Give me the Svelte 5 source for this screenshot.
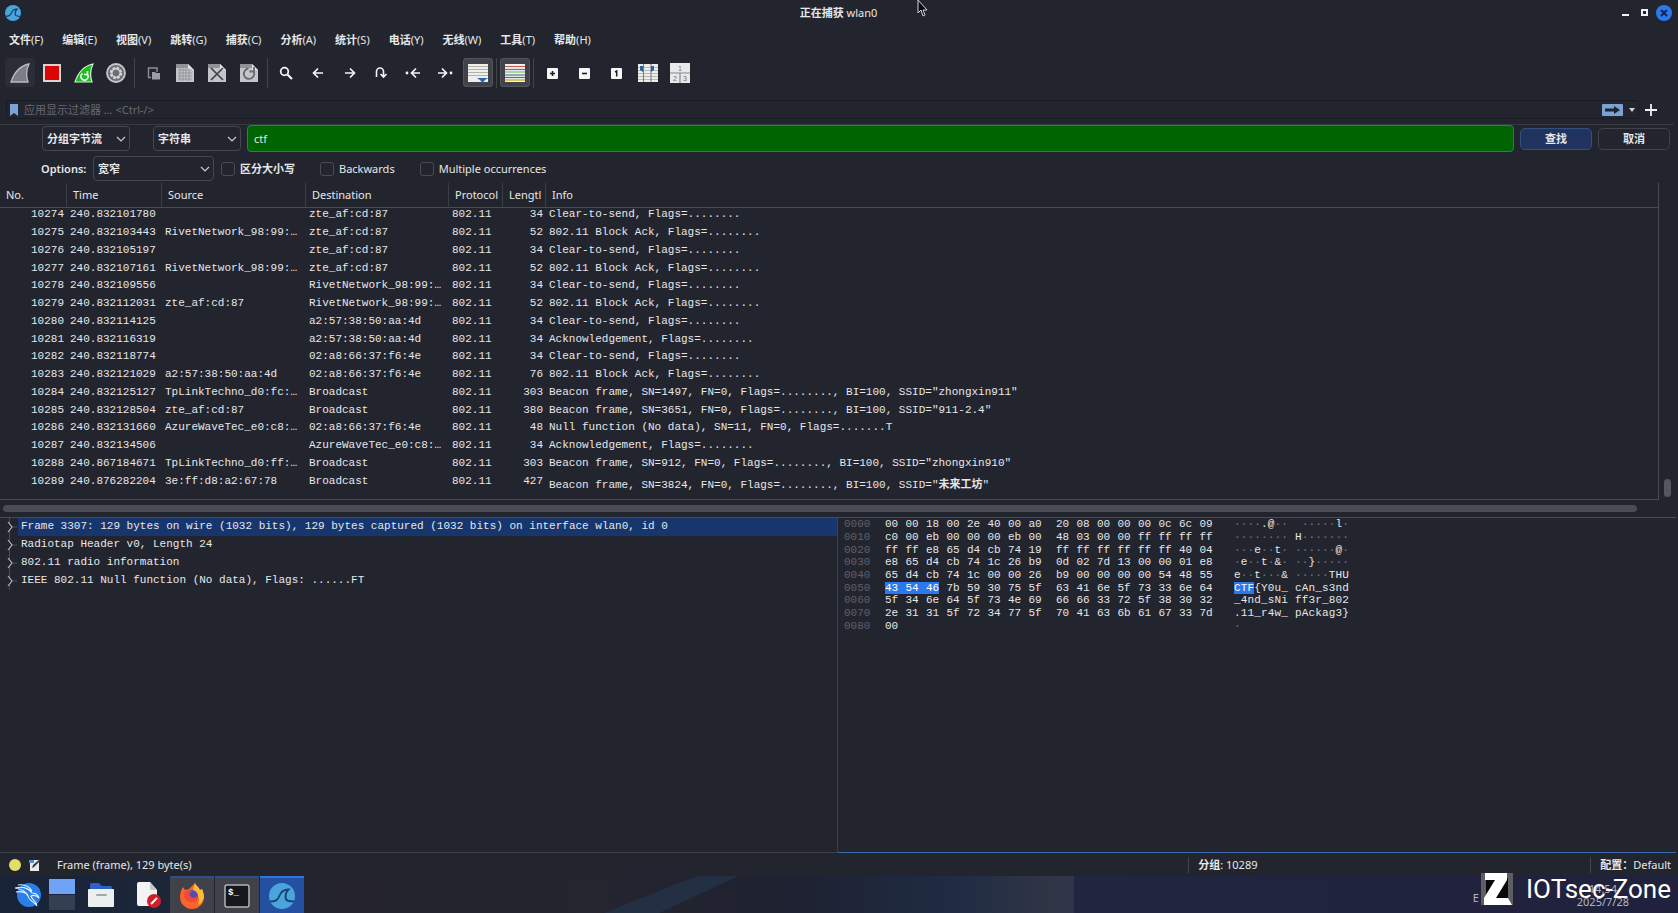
<script lang="ts">
  type Packet = [number, string, string, string, number, string, string?];

  const menus = [
    ['文件', 'F'], ['编辑', 'E'], ['视图', 'V'], ['跳转', 'G'], ['捕获', 'C'], ['分析', 'A'],
    ['统计', 'S'], ['电话', 'Y'], ['无线', 'W'], ['工具', 'T'], ['帮助', 'H'],
  ];

  const tools = [
    'start', 'stop', 'restart', 'options', '|', 'open', 'save', 'close', 'reload', '|',
    'find', 'back', 'forward', 'goto', 'first', 'last', 'autoscroll', '|', 'colorize', '|',
    'zoomin', 'zoomout', 'zoomreset', 'resize', 'layout',
  ];
  const pressed = ['autoscroll', 'colorize'];

  const columns = ['No.', 'Time', 'Source', 'Destination', 'Protocol', 'Lengtl', 'Info'];

  const packets: Packet[] = [
    [10274, '240.832101780', '', 'zte_af:cd:87', 34, 'Clear-to-send, Flags=........'],
    [10275, '240.832103443', 'RivetNetwork_98:99:…', 'zte_af:cd:87', 52, '802.11 Block Ack, Flags=........'],
    [10276, '240.832105197', '', 'zte_af:cd:87', 34, 'Clear-to-send, Flags=........'],
    [10277, '240.832107161', 'RivetNetwork_98:99:…', 'zte_af:cd:87', 52, '802.11 Block Ack, Flags=........'],
    [10278, '240.832109556', '', 'RivetNetwork_98:99:…', 34, 'Clear-to-send, Flags=........'],
    [10279, '240.832112031', 'zte_af:cd:87', 'RivetNetwork_98:99:…', 52, '802.11 Block Ack, Flags=........'],
    [10280, '240.832114125', '', 'a2:57:38:50:aa:4d', 34, 'Clear-to-send, Flags=........'],
    [10281, '240.832116319', '', 'a2:57:38:50:aa:4d', 34, 'Acknowledgement, Flags=........'],
    [10282, '240.832118774', '', '02:a8:66:37:f6:4e', 34, 'Clear-to-send, Flags=........'],
    [10283, '240.832121029', 'a2:57:38:50:aa:4d', '02:a8:66:37:f6:4e', 76, '802.11 Block Ack, Flags=........'],
    [10284, '240.832125127', 'TpLinkTechno_d0:fc:…', 'Broadcast', 303, 'Beacon frame, SN=1497, FN=0, Flags=........, BI=100, SSID=', 'zhongxin911'],
    [10285, '240.832128504', 'zte_af:cd:87', 'Broadcast', 380, 'Beacon frame, SN=3651, FN=0, Flags=........, BI=100, SSID=', '911-2.4'],
    [10286, '240.832131660', 'AzureWaveTec_e0:c8:…', '02:a8:66:37:f6:4e', 48, 'Null function (No data), SN=11, FN=0, Flags=.......T'],
    [10287, '240.832134506', '', 'AzureWaveTec_e0:c8:…', 34, 'Acknowledgement, Flags=........'],
    [10288, '240.867184671', 'TpLinkTechno_d0:ff:…', 'Broadcast', 303, 'Beacon frame, SN=912, FN=0, Flags=........, BI=100, SSID=', 'zhongxin910'],
    [10289, '240.876282204', '3e:ff:d8:a2:67:78', 'Broadcast', 427, 'Beacon frame, SN=3824, FN=0, Flags=........, BI=100, SSID=', '未来工坊'],
  ];

  const tree = [
    'Frame 3307: 129 bytes on wire (1032 bits), 129 bytes captured (1032 bits) on interface wlan0, id 0',
    'Radiotap Header v0, Length 24',
    '802.11 radio information',
    'IEEE 802.11 Null function (No data), Flags: ......FT',
  ];

  const dump = [
    '00 00 18 00 2e 40 00 a0 20 08 00 00 00 0c 6c 09',
    'c0 00 eb 00 00 00 eb 00 48 03 00 00 ff ff ff ff',
    'ff ff e8 65 d4 cb 74 19 ff ff ff ff ff ff 40 04',
    'e8 65 d4 cb 74 1c 26 b9 0d 02 7d 13 00 00 01 e8',
    '65 d4 cb 74 1c 00 00 26 b9 00 00 00 00 54 48 55',
    '43 54 46 7b 59 30 75 5f 63 41 6e 5f 73 33 6e 64',
    '5f 34 6e 64 5f 73 4e 69 66 66 33 72 5f 38 30 32',
    '2e 31 31 5f 72 34 77 5f 70 41 63 6b 61 67 33 7d',
    '00',
  ];

  const selStart = 0x50;
  const selEnd = 0x52;

  const rows = dump.map((line, r) => {
    const bytes = line.split(' ').map((hex, i) => {
      const code = parseInt(hex, 16);
      const pos = r * 16 + i;
      const printable = code >= 0x20 && code < 0x7f;
      return {
        hex,
        ch: printable ? String.fromCharCode(code) : '·',
        printable,
        selected: pos >= selStart && pos <= selEnd,
        last: pos === selEnd,
      };
    });
    return {
      offset: (r * 16).toString(16).padStart(4, '0'),
      groups: [bytes.slice(0, 8), bytes.slice(8)],
    };
  });

  let search = $state('ctf');
  let filter = $state('');
  let selectedItem = $state(0);
</script>

{#snippet sheet()}
  <path d="M1 1h12l6 6v12H1z" fill="#c3c5c9" />
  <path d="M1 1h12v4H1z" fill="#8f9298" />
  <path d="M13 1v6h6z" fill="#e2e3e6" />
{/snippet}

{#snippet wave(color: string)}
  <circle cx="12" cy="12" r="12" fill="#4aa5dc" />
  <path d="M1 17c5 0 7-1 8.500-5C11 8 13 6 18 6c-3 3-3 6-2.500 8.500C16 17 19 17 23 17" fill="none" stroke={color} stroke-width="1.700" />
{/snippet}

{#snippet icon(name: string)}
  <svg width="20" height="20" viewBox="0 0 20 20" aria-hidden="true">
    {#if name === 'start'}
      <path d="M1 19C4 10 9 3 19 1c-3 6-3 12-1 18z" fill="#7b7e85" stroke="#b9bbbf" stroke-width="1.3" />
    {:else if name === 'stop'}
      <rect x="1" y="1" width="18" height="18" fill="#d9d3d3" />
      <rect x="3" y="3" width="14" height="14" fill="#dd0404" />
    {:else if name === 'restart'}
      <path d="M1 19C4 10 9 3 19 1c-3 6-3 12-1 18z" fill="#17c01b" stroke="#d8efd8" stroke-width="1.2" />
      <path d="M8.500 10.500a3.600 3.600 0 1 0 5 1M13.500 8v3.500H10" fill="none" stroke="#fff" stroke-width="1.6" />
    {:else if name === 'options'}
      <circle cx="10" cy="10" r="9" fill="#6c6f76" stroke="#c5c7cb" stroke-width="1.8" />
      <circle cx="10" cy="10" r="5" fill="none" stroke="#d5d6d9" stroke-width="2.400" stroke-dasharray="2.6 1.300" />
      <circle cx="10" cy="10" r="4.200" fill="none" stroke="#d5d6d9" stroke-width="1.200" />
    {:else if name === 'open'}
      <path d="M8 14.500H5.500V5h8.500v4" fill="none" stroke="#8c8f95" stroke-width="1.400" />
      <path d="M9 9h3l1 1h4v6.500H9z" fill="#9b9ea3" />
    {:else if name === 'save'}
      {@render sheet()}
      <path d="M3 7h14M3 10h14M3 13h14M3 16h14M5 5v13M8 5v13M11 5v13M14 5v13" stroke="#85888e" stroke-width="0.700" />
    {:else if name === 'close'}
      {@render sheet()}
      <path d="M4 5l12 12M16 5L4 17" stroke="#3f4249" stroke-width="1.700" />
    {:else if name === 'reload'}
      {@render sheet()}
      <path d="M14.500 8a5.200 5.200 0 1 1-5-2.500M15 4v4.500h-4.500" fill="none" stroke="#65686f" stroke-width="1.800" />
    {:else if name === 'find'}
      <circle cx="8.500" cy="8.500" r="3.800" fill="none" stroke="#f4f4f5" stroke-width="1.800" />
      <path d="M11.500 11.500l4.500 4.500" stroke="#f4f4f5" stroke-width="2.200" />
    {:else if name === 'back'}
      <path d="M15 10H6M10 5.500L5.500 10l4.500 4.500" fill="none" stroke="#f4f4f5" stroke-width="1.700" />
    {:else if name === 'forward'}
      <path d="M5 10h9M10 5.500l4.500 4.500-4.500 4.500" fill="none" stroke="#f4f4f5" stroke-width="1.700" />
    {:else if name === 'goto'}
      <path d="M4.500 14V8.500a3.500 3.500 0 0 1 7 0V14M8.500 11l3 3 3-3" fill="none" stroke="#f4f4f5" stroke-width="1.600" />
    {:else if name === 'first'}
      <circle cx="3" cy="10" r="1.400" fill="#f4f4f5" />
      <path d="M16 10H8M12 5.500L7.500 10l4.500 4.500" fill="none" stroke="#f4f4f5" stroke-width="1.700" />
    {:else if name === 'last'}
      <circle cx="15" cy="10" r="1.400" fill="#f4f4f5" />
      <path d="M2 10h8M6 5.500l4.500 4.500L6 14.500" fill="none" stroke="#f4f4f5" stroke-width="1.700" />
    {:else if name === 'autoscroll'}
      <rect x="0" y="1" width="20" height="18" fill="#eeefea" />
      <path d="M0 3.500h20M0 6.500h20M0 9.500h20M0 12.500h20" stroke="#b3b2aa" />
      <path d="M9 15h11l-3 2-2.500 3-2.500-3z" fill="#2e66a5" />
    {:else if name === 'colorize'}
      <rect x="0" y="1" width="20" height="18" fill="#f4f4ee" />
      <path d="M0 3.500h20" stroke="#c95c5c" stroke-width="1.200" />
      <path d="M0 6.500h20" stroke="#67709f" stroke-width="1.200" />
      <path d="M0 9h20" stroke="#6fc65a" stroke-width="1.200" />
      <path d="M0 12h20" stroke="#4f72b1" stroke-width="1.200" />
      <path d="M0 14.500h20" stroke="#686b6f" stroke-width="1.200" />
      <path d="M0 17h20" stroke="#d8c46a" stroke-width="2" />
    {:else if name === 'zoomin'}
      <rect x="5" y="5" width="11" height="11" rx="1" fill="#f6f6f7" />
      <path d="M10.500 8v5M8 10.500h5" stroke="#1c1f27" stroke-width="1.600" />
    {:else if name === 'zoomout'}
      <rect x="5" y="5" width="11" height="11" rx="1" fill="#f6f6f7" />
      <path d="M8 10.500h5" stroke="#1c1f27" stroke-width="1.600" />
    {:else if name === 'zoomreset'}
      <rect x="5" y="5" width="11" height="11" rx="1" fill="#f6f6f7" />
      <path d="M9 9l1.700-1v5.500" fill="none" stroke="#1c1f27" stroke-width="1.500" />
    {:else if name === 'resize'}
      <rect x="0" y="1" width="20" height="18" fill="#eceeea" />
      <path d="M0 4.500h20M0 7.500h20M0 10.500h20M0 13.500h20M0 16.500h20" stroke="#b9bab5" />
      <path d="M5.500 1v18M13 1v18" stroke="#777a7d" />
      <path d="M2 3h3v6l-3-2zM16 3h-3v6l3-2z" fill="#2b62a4" />
    {:else if name === 'layout'}
      <rect x="0" y="0" width="20" height="20" fill="#e8e9e8" />
      <path d="M0 10h20M10 10v10" stroke="#85888b" stroke-width="1.200" />
      <g fill="#6f7275" font-family="Liberation Sans" font-size="7">
        <text x="8" y="8">1</text><text x="3" y="18">2</text><text x="13" y="18">3</text>
      </g>
    {/if}
  </svg>
{/snippet}

{#snippet chevron()}
  <svg class="chevron" width="10" height="10" viewBox="0 0 10 10" aria-hidden="true">
    <path d="M1 3l4 4 4-4" fill="none" stroke="#c9cbd0" stroke-width="1.200" />
  </svg>
{/snippet}

<div class="window">
  <header class="titlebar">
    <svg class="app-icon" width="16" height="16" viewBox="0 0 24 24" aria-hidden="true">{@render wave('#123f63')}</svg>
    <h1><b>正在捕获</b> wlan0</h1>
    <div class="window-buttons">
      <button aria-label="最小化"><svg width="16" height="16" viewBox="0 0 16 16"><path d="M4 10h7" stroke="#f2f2f3" stroke-width="2" /></svg></button>
      <button aria-label="最大化"><svg width="16" height="16" viewBox="0 0 16 16"><rect x="5" y="5" width="5" height="5" fill="none" stroke="#f2f2f3" stroke-width="2" /></svg></button>
      <button aria-label="关闭"><svg width="16" height="16" viewBox="0 0 16 16"><circle cx="8" cy="8" r="8" fill="#2c78ee" /><path d="M5 5l6 6M11 5l-6 6" stroke="#14264d" stroke-width="2" /></svg></button>
    </div>
    <svg class="pointer" width="11" height="18" viewBox="0 0 11 18" aria-hidden="true">
      <path d="M1 0v13l3-3 2 6 2-1-2-5h4z" fill="#08090b" stroke="#d4d5d8" />
    </svg>
  </header>

  <nav class="menubar">
    {#each menus as [label, key]}
      <button><b>{label}</b>({key})</button>
    {/each}
  </nav>

  <div class="toolbar" role="toolbar">
    {#each tools as tool}
      {#if tool === '|'}
        <span class="separator"></span>
      {:else}
        <button class:pressed={pressed.includes(tool)} class:soft={tool === 'start'} aria-label={tool}>
          {@render icon(tool)}
        </button>
      {/if}
    {/each}
  </div>

  <div class="filterbar">
    <div class="filter-field">
      <button class="bookmark" aria-label="书签">
        <svg width="8" height="12" viewBox="0 0 8 12"><path d="M0 0h8v12L4 9l-4 3z" fill="#7aa4d8" /></svg>
      </button>
      <input aria-label="显示过滤器" placeholder="应用显示过滤器 … <Ctrl-/>" bind:value={filter} />
      <button class="apply" aria-label="应用">
        <svg width="15" height="8" viewBox="0 0 15 8"><path d="M0 2.500h9V0l6 4-6 4V5.500H0z" fill="#1c2534" /></svg>
      </button>
      <button class="history" aria-label="历史">
        <svg width="6" height="4" viewBox="0 0 6 4"><path d="M0 0h6L3 4z" fill="#cfd1d5" /></svg>
      </button>
    </div>
    <button class="add" aria-label="添加">
      <svg width="12" height="12" viewBox="0 0 12 12"><path d="M6 0v12M0 6h12" stroke="#f2f2f3" stroke-width="1.800" /></svg>
    </button>
  </div>

  <form class="search" onsubmit={(e) => e.preventDefault()}>
    <div class="search-row">
      <div class="combo domain">
        <select aria-label="查找范围"><option>分组字节流</option></select>
        {@render chevron()}
      </div>
      <div class="combo kind">
        <select aria-label="查找类型"><option>字符串</option></select>
        {@render chevron()}
      </div>
      <input class="query" aria-label="查找内容" bind:value={search} />
      <button class="action primary">查找</button>
      <button class="action" type="button">取消</button>
    </div>
    <div class="options-row">
      <label class="options-label" for="charset">Options:</label>
      <div class="combo charset">
        <select id="charset"><option>宽窄</option></select>
        {@render chevron()}
      </div>
      <label class="check"><input type="checkbox" /><b>区分大小写</b></label>
      <label class="check backwards"><input type="checkbox" />Backwards</label>
      <label class="check"><input type="checkbox" />Multiple occurrences</label>
    </div>
  </form>

  <section class="packets">
    <div class="packet-list">
      <table>
        <colgroup>
          <col class="c-no" /><col class="c-time" /><col class="c-src" /><col class="c-dst" />
          <col class="c-proto" /><col class="c-len" /><col />
        </colgroup>
        <thead>
          <tr>
            {#each columns as column}<th>{column}</th>{/each}
          </tr>
        </thead>
        <tbody>
          {#each packets as [no, time, source, destination, length, info, ssid]}
            <tr>
              <td class="num">{no}</td>
              <td>{time}</td>
              <td>{source}</td>
              <td>{destination}</td>
              <td>802.11</td>
              <td class="num">{length}</td>
              <td class="info">{info}{#if ssid}"<span>{ssid}</span>"{/if}</td>
            </tr>
          {/each}
        </tbody>
      </table>
    </div>
    <div class="v-scroll"><span></span></div>
  </section>
  <div class="h-scroll"><span></span></div>

  <main class="details">
    <ul class="tree">
      {#each tree as item, i}
        <li>
          <button class:selected={selectedItem === i} onclick={() => (selectedItem = i)}>
            <svg width="18" height="18" viewBox="0 0 18 18" aria-hidden="true">
              <path d="M9.500 0v5M9.500 13v5M13 9h4" stroke="#4b4e56" />
              <path d="M8 4l4 5-4 5" fill="none" stroke="#b9bbc0" stroke-width="1.200" />
            </svg>
            <span>{item}</span>
          </button>
        </li>
      {/each}
    </ul>
    <div class="bytes">
      {#each rows as row}
        <div class="byte-row">
          <span class="offset">{row.offset}</span>
          {#each row.groups as group}
            <span class="hex">
              {#each group as byte}
                <span class:selected={byte.selected} class:last={byte.last}>{byte.hex}</span>
              {/each}
            </span>
          {/each}
          <span class="gutter"></span>
          {#each row.groups as group}
            <span class="ascii">
              {#each group as byte}
                <span class:selected={byte.selected} class:dim={!byte.printable}>{byte.ch}</span>
              {/each}
            </span>
          {/each}
        </div>
      {/each}
    </div>
  </main>

  <footer class="statusbar">
    <svg width="12" height="12" viewBox="0 0 12 12" aria-hidden="true"><circle cx="6" cy="6" r="6" fill="#e2de6a" /></svg>
    <svg width="12" height="12" viewBox="0 0 12 12" aria-hidden="true">
      <path d="M1 1h9v11H1z" fill="#e7eaec" />
      <path d="M0 1h5v3H0z" fill="#5791bd" />
      <path d="M3 9l1-3 7-6 1 1-7 7z" fill="#30343a" />
    </svg>
    <span class="status-text">Frame (frame), 129 byte(s)</span>
    <span class="status-cell count"><b>分组</b>: 10289</span>
    <span class="status-cell profile"><b>配置：</b>Default</span>
  </footer>

  <div class="taskbar">
    <button class="task kali" aria-label="Kali">
      <svg width="26" height="26" viewBox="0 0 26 26">
        <circle cx="14" cy="13" r="12" fill="#2b7fe8" />
        <path d="M0 6c7-2 14 0 17 5 3 0 6 2 7 5-3-3-6-3-8-2 1 4 5 4 6 10-2-4-8-5-9-10C11 9 6 7 0 6zM1 10c5-1 9 0 12 3M3 3c6-1 11 1 14 6" fill="none" stroke="#eaf3ff" stroke-width="1.100" />
      </svg>
    </button>
    <button class="pager" aria-label="工作区"><span></span><span></span></button>
    <button class="task files" aria-label="文件">
      <svg width="26" height="24" viewBox="0 0 26 24">
        <path d="M2 2q0-2 2-2h7l3 3h8q2 0 2 2v6H2z" fill="#2c62c4" />
        <rect y="6" width="26" height="18" rx="1" fill="#eceef0" />
        <rect x="8" y="11" width="11" height="2" rx="1" fill="#a5a8ab" />
      </svg>
    </button>
    <button class="task editor" aria-label="编辑器">
      <svg width="24" height="26" viewBox="0 0 24 26">
        <path d="M0 2q0-2 2-2h11l7 8v16H2q-2 0-2-2z" fill="#f3f3f4" />
        <path d="M13 0l7 8h-7z" fill="#c6c8ca" />
        <circle cx="17" cy="19" r="7" fill="#cf1f2b" />
        <path d="M14 22l6-6" stroke="#fff" stroke-width="2" />
      </svg>
    </button>
    <button class="tile" aria-label="Firefox">
      <svg width="26" height="26" viewBox="0 0 26 26">
        <path d="M1 14C1 10 2 7 4 4l2 3 4-1c2-2 4-4 6-6 1 3 4 4 5 7l2-1c1 3 2 5 2 8a12 12 0 0 1-24 0z" fill="#f8642b" />
        <path d="M16 0c1 3 4 4 5 7l2-1c1 3 2 5 2 8-1 4-3 7-6 8 2-5 1-10-5-15z" fill="#fdbb35" />
        <circle cx="13" cy="13" r="6" fill="#5a4ab8" />
        <path d="M6 8c3-2 5 0 8 1-4 0-4 2-3 4 2 3 6 2 7 0 1 5-3 7-7 6-5-1-7-6-5-11z" fill="#f24a37" />
      </svg>
    </button>
    <button class="tile" aria-label="终端">
      <svg width="26" height="24" viewBox="0 0 26 24">
        <rect x="1" y="1" width="24" height="22" rx="2" fill="#15171a" stroke="#b3b5b9" stroke-width="1.500" />
        <text x="4" y="11" fill="#fff" font-family="Liberation Mono" font-size="9" font-weight="700">$_</text>
      </svg>
    </button>
    <button class="tile active" aria-label="Wireshark">
      <svg width="26" height="26" viewBox="0 0 24 24">{@render wave('#174274')}</svg>
    </button>
    <div class="tray">
      <span class="keyboard">E</span>
      <div class="clock"><span>14:54</span><span>2025/7/28</span></div>
    </div>
    <div class="brand">
      <svg width="32" height="32" viewBox="0 0 32 32" aria-hidden="true">
        <path d="M0 0h32v32H0z" fill="#5d5e62" />
        <path d="M5 5h22v22H5z" fill="#08090a" />
        <path d="M4 0h22v7L15 25h12l4 7H3v-7L14 7H4z" fill="#fff" />
      </svg>
      <span>IOTsec-Zone</span>
    </div>
  </div>
</div>

<style>
  :global(body) {
    margin: 0;
    background: #23252e;
  }
  .window {
    --line: #4a4c54;
    --mono: 'Liberation Mono', 'Noto Sans CJK SC', monospace;
    display: flex;
    flex-direction: column;
    min-height: 100vh;
    background: #23252e;
    color: #e6e7ea;
    font: 11px/16px 'Noto Sans', 'Noto Sans CJK SC', sans-serif;
  }
  button,
  input,
  select {
    font: inherit;
    color: inherit;
    background: none;
    border: 0;
    margin: 0;
    padding: 0;
    box-sizing: border-box;
  }
  svg {
    display: block;
    flex: none;
  }

  .titlebar {
    position: relative;
    display: grid;
    grid-template-columns: 1fr auto 1fr;
    align-items: center;
    height: 25px;
    padding: 0 6px 0 5px;
  }
  .titlebar h1 {
    margin: 0;
    font: inherit;
  }
  .window-buttons {
    display: flex;
    justify-content: flex-end;
    gap: 3px;
  }
  .pointer {
    position: absolute;
    left: 917px;
    top: 0;
  }

  .menubar {
    display: flex;
    gap: 19px;
    height: 29px;
    padding-left: 9px;
  }

  .toolbar {
    display: flex;
    align-items: center;
    gap: 2px;
    height: 37px;
    padding: 0 5px;
  }
  .toolbar button {
    display: grid;
    place-items: center;
    width: 30px;
    height: 29px;
    border-radius: 4px;
  }
  .toolbar .soft {
    background: #2c2e37;
  }
  .toolbar .pressed {
    background: #42434a;
    box-shadow: inset 0 0 0 1px #52545b;
  }
  .separator {
    width: 1px;
    height: 30px;
    margin: 0 1px;
    background: #42444c;
  }

  .filterbar {
    display: flex;
    align-items: center;
    margin-top: 9px;
    padding: 0 21px 0 6px;
    gap: 6px;
  }
  .filter-field {
    display: flex;
    align-items: center;
    flex: 1;
    border: 1px solid #1a1c23;
    border-radius: 2px;
  }
  .filter-field input {
    flex: 1;
    height: 17px;
    outline: none;
  }
  .filter-field input::placeholder {
    color: #666971;
    opacity: 1;
  }
  .bookmark {
    padding: 0 6px 0 3px;
  }
  .apply {
    display: grid;
    place-items: center;
    width: 21px;
    height: 12px;
    border-radius: 1px;
    background: #7ba2d2;
  }
  .history {
    padding: 0 3px 0 6px;
  }

  .search {
    border-top: 1px solid #393b43;
    margin: 5px 4px 0 0;
  }
  .search-row {
    display: flex;
    align-items: center;
    gap: 6px;
    height: 27px;
    padding: 0 4px 0 42px;
  }
  .combo {
    position: relative;
    height: 25px;
    font-weight: 700;
  }
  .combo select {
    appearance: none;
    width: 100%;
    height: 100%;
    padding-left: 4px;
    border: 1px solid #454750;
    border-radius: 4px;
  }
  .chevron {
    position: absolute;
    right: 4px;
    top: 8px;
    pointer-events: none;
  }
  .domain {
    width: 88px;
    margin-right: 17px;
  }
  .kind {
    width: 88px;
  }
  .charset {
    width: 121px;
  }
  .query {
    flex: 1;
    height: 27px;
    padding: 0 6px;
    border: 1px solid #257a82;
    border-radius: 4px;
    background: #006400;
    outline: none;
  }
  .action {
    width: 72px;
    height: 22px;
    border: 1px solid #41434b;
    border-radius: 5px;
    font-weight: 700;
  }
  .primary {
    background: #20345f;
    border-color: #34507f;
  }
  .options-row {
    display: flex;
    align-items: center;
    height: 27px;
    padding: 3px 0 1px 41px;
  }
  .options-label {
    width: 52px;
    font-weight: 600;
  }
  .check {
    display: flex;
    align-items: center;
    gap: 5px;
    margin-left: 7px;
  }
  .check input {
    appearance: none;
    width: 14px;
    height: 14px;
    border: 1px solid #4a4c55;
    border-radius: 3px;
  }
  .backwards {
    margin: 0 18px 0 25px;
  }

  .packets {
    display: flex;
  }
  .packet-list {
    flex: 1;
    padding-bottom: 2px;
    border: 1px solid var(--line);
    border-width: 0 1px 1px 0;
  }
  table {
    width: 100%;
    table-layout: fixed;
    border-collapse: separate;
    border-spacing: 0;
  }
  .c-no {
    width: 67px;
  }
  .c-time {
    width: 95px;
  }
  .c-src {
    width: 144px;
  }
  .c-dst {
    width: 143px;
  }
  .c-proto {
    width: 54px;
  }
  .c-len {
    width: 43px;
  }
  th {
    height: 25px;
    padding: 0 0 0 6px;
    border-bottom: 1px solid var(--line);
    border-right: 1px solid #3c3e46;
    font-weight: 400;
    text-align: left;
    white-space: nowrap;
    overflow: hidden;
    box-sizing: border-box;
  }
  th:last-child {
    border-right: 0;
  }
  td {
    height: 18px;
    padding: 0 3px;
    font-family: var(--mono);
    line-height: 17px;
    white-space: nowrap;
    vertical-align: top;
  }
  tr:nth-child(4n) td {
    height: 17px;
  }
  tbody tr:first-child td {
    height: 16px;
    line-height: 13px;
  }
  tbody tr:last-child td {
    height: 24px;
  }
  tbody tr:last-child .info {
    vertical-align: middle;
  }
  tbody tr:last-child .info span {
    font-weight: 700;
  }
  .num {
    text-align: right;
  }
  .v-scroll {
    display: flex;
    align-items: flex-end;
    padding: 0 7px 3px 5px;
  }
  .v-scroll span {
    width: 7px;
    height: 18px;
    border-radius: 4px;
    background: #555760;
  }
  .h-scroll {
    padding: 5px 41px 5px 3px;
  }
  .h-scroll span {
    display: block;
    height: 7px;
    border-radius: 4px;
    background: #4a4c54;
  }

  .details {
    display: grid;
    grid-template-columns: 1fr 1fr;
    flex: 1;
    margin-right: 2px;
    border-top: 1px solid var(--line);
    font-family: var(--mono);
  }
  .tree {
    margin: 0;
    padding: 0;
    list-style: none;
    border: 1px solid #3f4149;
    border-width: 0 1px 1px 0;
  }
  .tree button {
    display: flex;
    width: 100%;
    height: 18px;
    text-align: left;
  }
  .tree span {
    flex: 1;
    padding-left: 3px;
    line-height: 17px;
    white-space: nowrap;
  }
  .tree .selected span {
    background: #17366e;
  }
  .bytes {
    padding-left: 6px;
    border-bottom: 1px solid #3a69ad;
    line-height: 13px;
  }
  .byte-row {
    display: flex;
    gap: 7px;
  }
  .byte-row:nth-child(3n) {
    line-height: 12px;
  }
  .offset {
    width: 34px;
    color: #5d6068;
  }
  .hex {
    display: grid;
    grid-template-columns: repeat(8, 1fr);
    width: 164px;
  }
  .ascii {
    display: grid;
    grid-template-columns: repeat(8, 1fr);
    width: 54px;
    white-space: pre;
  }
  .gutter {
    width: 0;
  }
  .dim {
    color: #767982;
  }
  .bytes .selected {
    background: #2b78ee;
    color: #fff;
  }
  .hex .last {
    justify-self: start;
  }

  .statusbar {
    display: flex;
    align-items: center;
    height: 23px;
    padding-left: 9px;
    gap: 8px;
  }
  .status-text {
    flex: 1;
    padding-left: 8px;
  }
  .status-cell {
    padding-left: 9px;
    border-left: 1px solid #44464e;
    box-sizing: border-box;
  }
  .count {
    width: 394px;
  }
  .profile {
    padding-right: 7px;
  }

  .taskbar {
    position: relative;
    display: flex;
    align-items: stretch;
    height: 37px;
    background: linear-gradient(90deg, #192338 0, #1c2638 9%, #25242e 20%, #24252f 36%, #20222f 44%, #1e2233 48%, #1f2c43 57%, #2f3445 62%, #31354a 64%, #202640 64%, #20213d 100%);
  }
  .taskbar::before {
    content: '';
    position: absolute;
    inset: 0 56% 0 36%;
    background: #232f43;
    clip-path: polygon(69% 0, 100% 0, 41% 100%, 0 100%);
  }
  .task {
    display: grid;
    place-items: center;
  }
  .kali {
    padding-left: 15px;
  }
  .pager {
    display: grid;
    gap: 1px;
    width: 26px;
    height: 31px;
    margin: 3px 0 0 8px;
  }
  .pager span {
    background: #344052;
  }
  .pager span:first-child {
    background: #70a3f5;
  }
  .files {
    padding-left: 13px;
  }
  .editor {
    padding: 0 9px 0 23px;
  }
  .tile {
    display: grid;
    place-items: center;
    width: 44px;
    margin-right: 1px;
    border-top: 2px solid #2b4f8a;
    background: #414149;
  }
  .tile.active {
    background: #2350a1;
    border-color: #2f74df;
  }
  .tray {
    display: flex;
    align-items: center;
    flex: 1;
    justify-content: flex-end;
    padding-right: 49px;
    color: #b5b6c2;
  }
  .keyboard {
    margin-right: 98px;
    padding-top: 6px;
  }
  .clock {
    display: flex;
    flex-direction: column;
    align-items: center;
    line-height: 13px;
  }
  .brand {
    position: absolute;
    right: 7px;
    top: -3px;
    display: flex;
    align-items: center;
    gap: 13px;
    color: #fff;
    font: 400 26px/32px Roboto, sans-serif;
  }
</style>
